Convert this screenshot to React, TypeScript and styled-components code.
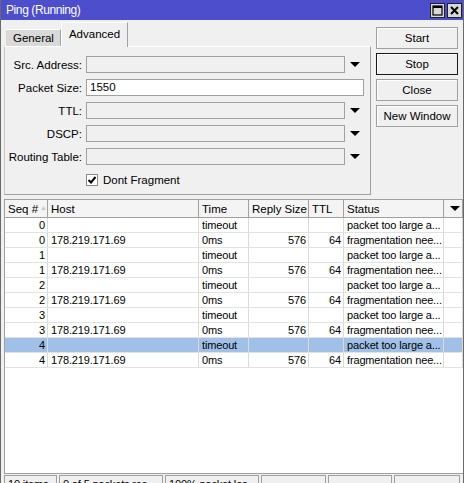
import React from "react";
import styled, { createGlobalStyle } from "styled-components";

const GlobalStyle = createGlobalStyle`
     body {
          margin: 0;
          background: #f0f0f0;
          font-family: "Liberation Sans", Arial, sans-serif;
          font-size: 11px;
          color: #000;
     }
`;

type PingRow = {
     seq: number;
     host: string;
     time: string;
     size: string;
     ttl: string;
     status: string;
};

const rows: PingRow[] = [0, 1, 2, 3, 4].flatMap((n) => [
     { seq: n, host: "", time: "timeout", size: "", ttl: "", status: "packet too large a..." },
     { seq: n, host: "178.219.171.69", time: "0ms", size: "576", ttl: "64", status: "fragmentation nee..." },
]);

const fields = [
     { label: "Src. Address:", value: "", dropdown: true },
     { label: "Packet Size:", value: "1550", dropdown: false },
     { label: "TTL:", value: "", dropdown: true },
     { label: "DSCP:", value: "", dropdown: true },
     { label: "Routing Table:", value: "", dropdown: true },
];

const statusCells = [
     { text: "10 items", width: 53 },
     { text: "0 of 5 packets rec...", width: 104 },
     { text: "100% packet los...", width: 94 },
     { text: "", width: 65 },
     { text: "", width: 64 },
     { text: "", width: 66 },
];

export default function App() {
     return (
          <>
               <GlobalStyle />
               <S.Window>
                    <S.TitleBar>
                         <S.Title>Ping (Running)</S.Title>
                         <S.TitleButtons>
                              <S.TitleButton>
                                   <svg width="11" height="11" viewBox="0 0 11 11">
                                        <rect x="1" y="1" width="9" height="9" fill="none" stroke="#000" strokeWidth="1.2" />
                                        <rect x="1" y="1" width="9" height="2" fill="#000" />
                                   </svg>
                              </S.TitleButton>
                              <S.TitleButton>
                                   <svg width="11" height="11" viewBox="0 0 11 11">
                                        <path d="M2 2 L9 9 M9 2 L2 9" stroke="#000" strokeWidth="2" />
                                   </svg>
                              </S.TitleButton>
                         </S.TitleButtons>
                    </S.TitleBar>

                    <S.Top>
                         <S.Left>
                              <S.Tabs>
                                   <S.Tab>General</S.Tab>
                                   <S.Tab $active>Advanced</S.Tab>
                              </S.Tabs>
                              <S.Panel>
                                   {fields.map((f) => (
                                        <S.FieldRow key={f.label}>
                                             <S.Label>{f.label}</S.Label>
                                             <S.Input $editable={!f.dropdown} $wide={!f.dropdown}>
                                                  {f.value}
                                             </S.Input>
                                             {f.dropdown && (
                                                  <S.ArrowCell>
                                                       <S.Arrow />
                                                  </S.ArrowCell>
                                             )}
                                        </S.FieldRow>
                                   ))}
                                   <S.CheckRow>
                                        <S.CheckBox>
                                             <svg width="10" height="10" viewBox="0 0 10 10">
                                                  <path d="M1.5 5 L4 7.5 L8.5 2" fill="none" stroke="#000" strokeWidth="2" />
                                             </svg>
                                        </S.CheckBox>
                                        <span>Dont Fragment</span>
                                   </S.CheckRow>
                              </S.Panel>
                         </S.Left>
                         <S.Buttons>
                              <S.Button>Start</S.Button>
                              <S.Button $focused>Stop</S.Button>
                              <S.Button>Close</S.Button>
                              <S.Button>New Window</S.Button>
                         </S.Buttons>
                    </S.Top>

                    <S.Table>
                         <S.HeaderRow>
                              <S.HeaderCell>
                                   Seq #<S.SortMark>▲</S.SortMark>
                              </S.HeaderCell>
                              <S.HeaderCell>Host</S.HeaderCell>
                              <S.HeaderCell>Time</S.HeaderCell>
                              <S.HeaderCell>Reply Size</S.HeaderCell>
                              <S.HeaderCell>TTL</S.HeaderCell>
                              <S.HeaderCell>Status</S.HeaderCell>
                              <S.HeaderCell $center>
                                   <S.Arrow />
                              </S.HeaderCell>
                         </S.HeaderRow>
                         {rows.map((r, i) => (
                              <S.Row key={i} $selected={i === 8}>
                                   <S.Cell $right>{r.seq}</S.Cell>
                                   <S.Cell>{r.host}</S.Cell>
                                   <S.Cell>{r.time}</S.Cell>
                                   <S.Cell $right>{r.size}</S.Cell>
                                   <S.Cell $right>{r.ttl}</S.Cell>
                                   <S.Cell>{r.status}</S.Cell>
                                   <S.Cell />
                              </S.Row>
                         ))}
                    </S.Table>

                    <S.StatusBar>
                         {statusCells.map((c, i) => (
                              <S.StatusCell key={i} style={{ width: c.width }}>
                                   {c.text}
                              </S.StatusCell>
                         ))}
                    </S.StatusBar>
               </S.Window>
          </>
     );
}

const columns = "43px 151px 50px 60px 35px 100px 1fr";

export const S = {
     Window: styled.div`
          width: 464px;
          height: 483px;
          box-sizing: border-box;
          border-left: 1px solid #6a6a6a;
          border-right: 1px solid #6a6a6a;
          overflow: hidden;
          display: flex;
          flex-direction: column;
     `,
     TitleBar: styled.div`
          height: 20px;
          flex: none;
          background: #4c4ecc;
          display: flex;
          align-items: center;
          justify-content: space-between;
          padding: 0 1px 0 5px;
     `,
     Title: styled.div`
          color: #fff;
          font-size: 12px;
          letter-spacing: -0.4px;
     `,
     TitleButtons: styled.div`
          display: flex;
          gap: 2px;
     `,
     TitleButton: styled.div`
          width: 15px;
          height: 15px;
          box-sizing: border-box;
          background: #d8d8d8;
          border: 1px solid #222;
          display: flex;
          align-items: center;
          justify-content: center;
     `,
     Top: styled.div`
          display: flex;
          padding: 0 0 0 3px;
          gap: 5px;
     `,
     Left: styled.div`
          width: 367px;
          display: flex;
          flex-direction: column;
     `,
     Tabs: styled.div`
          display: flex;
          align-items: flex-end;
          height: 26px;
          padding-left: 1px;
     `,
     Tab: styled.div<{ $active?: boolean }>`
          box-sizing: border-box;
          height: ${(p) => (p.$active ? "25px" : "17px")};
          padding: ${(p) => (p.$active ? "5px 7px 0 7px" : "2px 6px 0 7px")};
          background: ${(p) => (p.$active ? "#f0f0f0" : "#d9d9d9")};
          border-top: 1px solid #fff;
          border-left: 1px solid ${(p) => (p.$active ? "#fff" : "#f0f0f0")};
          border-right: 1px solid #a0a0a0;
          margin-bottom: ${(p) => (p.$active ? "-1px" : "0")};
          position: relative;
          font-size: 11.5px;
     `,
     Panel: styled.div`
          box-sizing: border-box;
          height: 149px;
          border-top: 1px solid #fff;
          border-left: 1px solid #c8c8c8;
          border-right: 1px solid #a0a0a0;
          border-bottom: 1px solid #a0a0a0;
          padding: 9px 0 0 0;
          display: flex;
          flex-direction: column;
          gap: 6px;
     `,
     FieldRow: styled.div`
          display: flex;
          align-items: center;
          height: 17px;
     `,
     Label: styled.div`
          width: 77px;
          text-align: right;
          padding-right: 4px;
          font-size: 11.5px;
          white-space: nowrap;
     `,
     Input: styled.div<{ $editable?: boolean; $wide?: boolean }>`
          box-sizing: border-box;
          height: 17px;
          width: ${(p) => (p.$wide ? "278px" : "259px")};
          border: 1px solid #a0a0a0;
          background: ${(p) => (p.$editable ? "#fff" : "#f0f0f0")};
          padding: 1px 3px;
          font-size: 11.5px;
     `,
     ArrowCell: styled.div`
          width: 20px;
          display: flex;
          justify-content: center;
          align-items: center;
     `,
     Arrow: styled.div`
          width: 0;
          height: 0;
          border-left: 5px solid transparent;
          border-right: 5px solid transparent;
          border-top: 5px solid #000;
     `,
     CheckRow: styled.div`
          display: flex;
          align-items: center;
          gap: 5px;
          margin: 3px 0 0 81px;
          font-size: 11.5px;
     `,
     CheckBox: styled.div`
          width: 12px;
          height: 12px;
          box-sizing: border-box;
          border: 1px solid #8a8a8a;
          background: #fff;
          display: flex;
          align-items: center;
          justify-content: center;
     `,
     Buttons: styled.div`
          display: flex;
          flex-direction: column;
          gap: 4px;
          padding-top: 7px;
     `,
     Button: styled.div<{ $focused?: boolean }>`
          box-sizing: border-box;
          width: 82px;
          height: 22px;
          border: 1px solid ${(p) => (p.$focused ? "#1a1a1a" : "#a0a0a0")};
          box-shadow: inset 1px 1px 0 #fff;
          background: #f0f0f0;
          display: flex;
          align-items: center;
          justify-content: center;
          font-size: 11.5px;
     `,
     Table: styled.div`
          box-sizing: border-box;
          margin: 4px 0 0 3px;
          height: 275px;
          flex: none;
          background: #fff;
          border: 1px solid #a0a0a0;
          border-right: none;
          overflow: hidden;
     `,
     HeaderRow: styled.div`
          display: grid;
          grid-template-columns: ${columns};
          height: 17px;
          background: #f4f4f4;
          border-bottom: 1px solid #a0a0a0;
     `,
     HeaderCell: styled.div<{ $center?: boolean }>`
          display: flex;
          align-items: center;
          justify-content: ${(p) => (p.$center ? "center" : "flex-start")};
          padding-left: 3px;
          border-right: 1px solid #a0a0a0;
          font-size: 11.5px;
          white-space: nowrap;
          overflow: hidden;
     `,
     SortMark: styled.span`
          font-size: 7px;
          color: #c8c8c8;
          margin-left: 2px;
          padding-bottom: 3px;
     `,
     Row: styled.div<{ $selected?: boolean }>`
          display: grid;
          grid-template-columns: ${columns};
          height: 15px;
          box-sizing: border-box;
          background: ${(p) => (p.$selected ? "#a0c0e8" : "#fff")};
          border-bottom: 1px solid #e2e2e2;
     `,
     Cell: styled.div<{ $right?: boolean }>`
          box-sizing: border-box;
          border-right: 1px solid #dadada;
          padding: 0 2px 0 3px;
          line-height: 14px;
          text-align: ${(p) => (p.$right ? "right" : "left")};
          font-size: 11px;
          letter-spacing: -0.15px;
          white-space: nowrap;
          overflow: hidden;
     `,
     StatusBar: styled.div`
          display: flex;
          gap: 2px;
          padding: 1px 0 0 3px;
     `,
     StatusCell: styled.div`
          box-sizing: border-box;
          height: 16px;
          border: 1px solid #a0a0a0;
          border-bottom: none;
          padding: 2px 0 0 3px;
          font-size: 11px;
          letter-spacing: -0.15px;
          white-space: nowrap;
          overflow: hidden;
     `,
};
